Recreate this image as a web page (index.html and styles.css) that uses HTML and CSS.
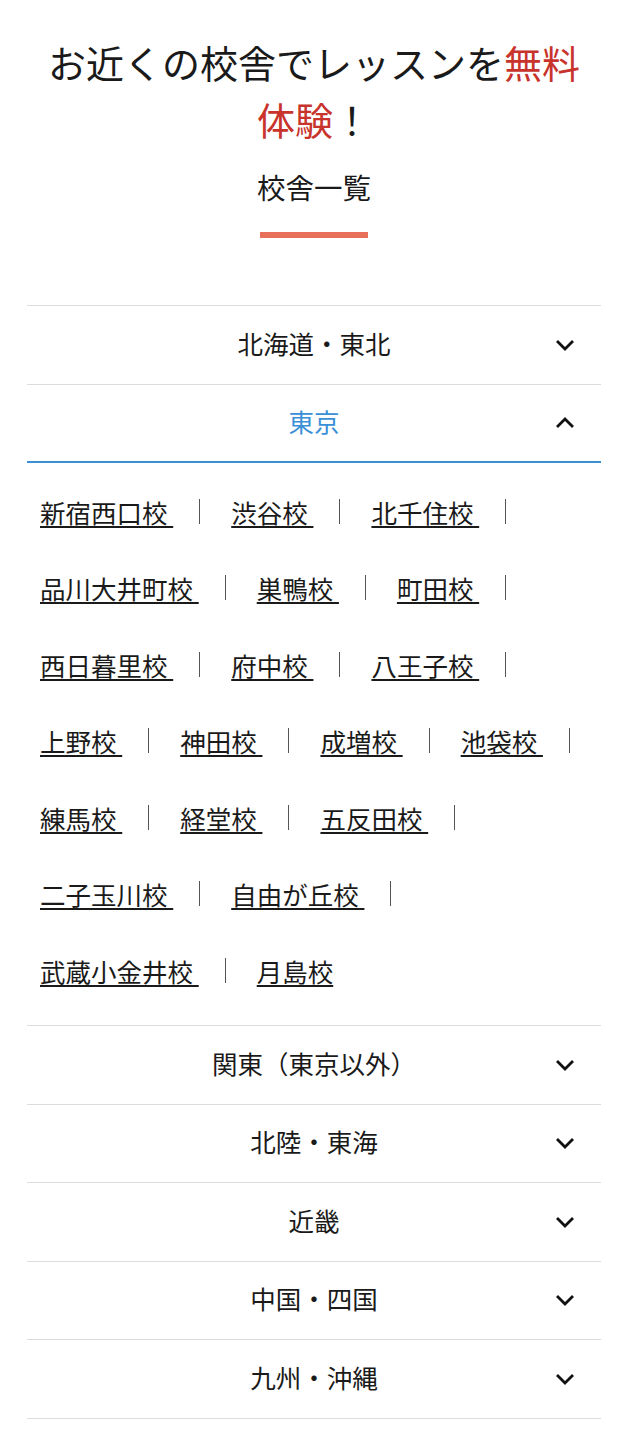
FILE: index.html
```html
<!DOCTYPE html>
<html lang="ja">

<head>
    <meta charset="UTF-8">
    <title>校舎一覧</title>
    <link rel="stylesheet" href="styles.css">
</head>

<body>
    <div class="container">
        <h2 class="lead">お近くの校舎でレッスンを<em>無料</em><em>体験</em>！</h2>
        <h3 class="title">校舎一覧</h3>
        <div class="title-bar"></div>

        <div class="area-list">
            <div class="area">
                <div class="area-head">
                    <span></span>
                    <span class="area-name">北海道・東北</span>
                    <svg class="arrow" viewBox="0 0 20 12"><path d="M2 2 L10 10 L18 2" /></svg>
                </div>
            </div>
            <div class="area open">
                <div class="area-head">
                    <span></span>
                    <span class="area-name">東京</span>
                    <svg class="arrow" viewBox="0 0 20 12"><path d="M2 10 L10 2 L18 10" /></svg>
                </div>
                <ul class="school-list">
                    <li><a href="#">新宿西口校&nbsp;</a></li>
                    <li><a href="#">渋谷校&nbsp;</a></li>
                    <li><a href="#">北千住校&nbsp;</a></li>
                    <li><a href="#">品川大井町校&nbsp;</a></li>
                    <li><a href="#">巣鴨校&nbsp;</a></li>
                    <li><a href="#">町田校&nbsp;</a></li>
                    <li><a href="#">西日暮里校&nbsp;</a></li>
                    <li><a href="#">府中校&nbsp;</a></li>
                    <li><a href="#">八王子校&nbsp;</a></li>
                    <li><a href="#">上野校&nbsp;</a></li>
                    <li><a href="#">神田校&nbsp;</a></li>
                    <li><a href="#">成増校&nbsp;</a></li>
                    <li><a href="#">池袋校&nbsp;</a></li>
                    <li><a href="#">練馬校&nbsp;</a></li>
                    <li><a href="#">経堂校&nbsp;</a></li>
                    <li><a href="#">五反田校&nbsp;</a></li>
                    <li><a href="#">二子玉川校&nbsp;</a></li>
                    <li><a href="#">自由が丘校&nbsp;</a></li>
                    <li><a href="#">武蔵小金井校&nbsp;</a></li>
                    <li><a href="#">月島校</a></li>
                </ul>
            </div>
            <div class="area">
                <div class="area-head">
                    <span></span>
                    <span class="area-name">関東（東京以外）</span>
                    <svg class="arrow" viewBox="0 0 20 12"><path d="M2 2 L10 10 L18 2" /></svg>
                </div>
            </div>
            <div class="area">
                <div class="area-head">
                    <span></span>
                    <span class="area-name">北陸・東海</span>
                    <svg class="arrow" viewBox="0 0 20 12"><path d="M2 2 L10 10 L18 2" /></svg>
                </div>
            </div>
            <div class="area">
                <div class="area-head">
                    <span></span>
                    <span class="area-name">近畿</span>
                    <svg class="arrow" viewBox="0 0 20 12"><path d="M2 2 L10 10 L18 2" /></svg>
                </div>
            </div>
            <div class="area">
                <div class="area-head">
                    <span></span>
                    <span class="area-name">中国・四国</span>
                    <svg class="arrow" viewBox="0 0 20 12"><path d="M2 2 L10 10 L18 2" /></svg>
                </div>
            </div>
            <div class="area">
                <div class="area-head">
                    <span></span>
                    <span class="area-name">九州・沖縄</span>
                    <svg class="arrow" viewBox="0 0 20 12"><path d="M2 2 L10 10 L18 2" /></svg>
                </div>
            </div>
        </div>
    </div>
</body>

</html>
```

FILE: styles.css
```css
* {
    margin: 0;
    padding: 0;
}

body {
    font-family: "Noto Sans CJK JP", "Noto Sans", sans-serif;
    color: #1a1a1a;
    background: #fff;
}

.container {
    margin: 0 25px 0 27px;
    padding-top: 33px;
}

.lead {
    font-size: 38px;
    font-weight: normal;
    line-height: 57px;
    text-align: center;
    padding: 0 10px;
}

.lead em {
    font-style: normal;
    color: #c8332b;
}

.title {
    margin-top: 18px;
    font-size: 28.5px;
    font-weight: normal;
    line-height: 43px;
    text-align: center;
}

.title-bar {
    width: 108px;
    height: 6px;
    margin: 24px auto 0;
    background-color: #e8705a;
}

.area-list {
    margin-top: 67px;
    border-top: 1px solid #dcdcdc;
}

.area {
    border-bottom: 1px solid #dcdcdc;
}

.area-head {
    display: grid;
    grid-template-columns: 26px 1fr 26px;
    align-items: center;
    height: 77.5px;
    padding: 0 20px;
    font-size: 25.5px;
    cursor: pointer;
}

.area-name {
    margin-bottom: 5px;
    text-align: center;
}

.arrow {
    width: 20px;
    height: 12px;
    fill: none;
    stroke: #111;
    stroke-width: 2.8;
}

.area.open .area-head {
    border-bottom: 2px solid #3a8fd6;
    height: 76.5px;
}

.area.open .area-name {
    color: #3a8fd6;
}

.school-list {
    list-style: none;
    display: flex;
    flex-wrap: wrap;
    row-gap: 42.5px;
    column-gap: 31px;
    padding: 31px 13px 38px;
}

.school-list li {
    display: flex;
    align-items: center;
    height: 34px;
    font-size: 25.5px;
}

.school-list li::after {
    content: "";
    width: 1px;
    height: 25px;
    margin-left: 26px;
    background-color: #555;
}

.school-list li:last-child::after {
    display: none;
}

.school-list a {
    color: #1a1a1a;
    text-decoration: underline;
    text-underline-offset: 3px;
}
```
